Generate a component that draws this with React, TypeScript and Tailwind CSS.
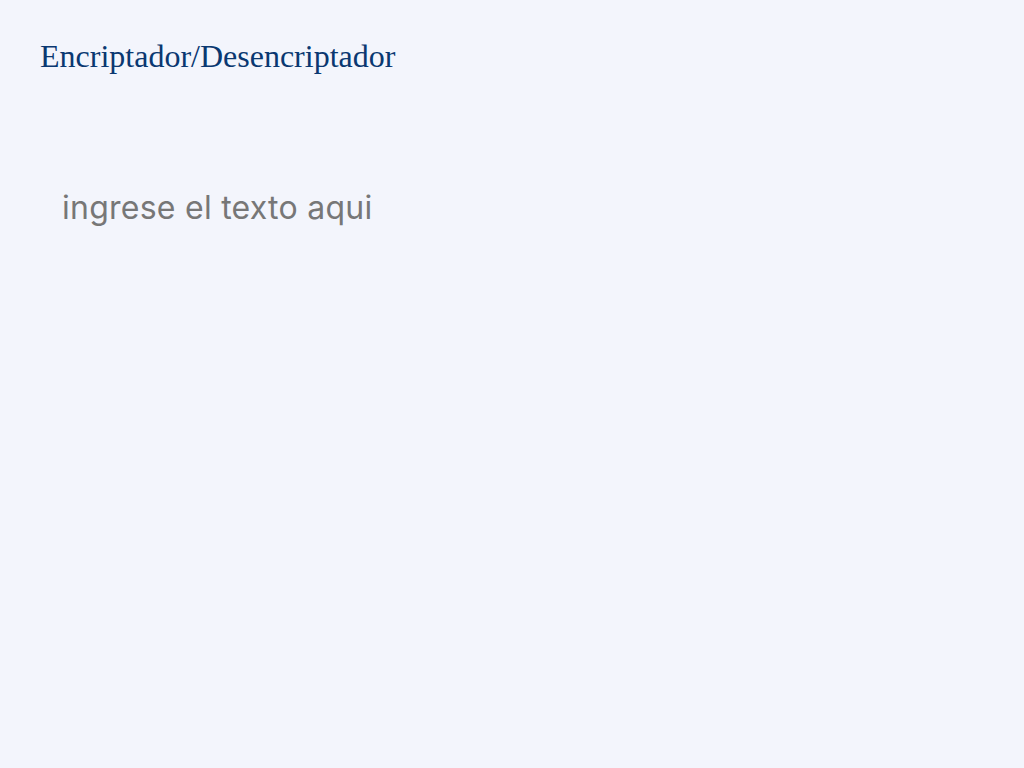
import React from 'react';

export default function App() {
    return (
        <div className="min-h-screen bg-[#f3f5fc] flex flex-col">
            <header className="px-10 pt-[38px]">
                <h1 className="text-[32px] leading-9 text-[#0a3871] font-['Liberation_Serif',serif]">
                    Encriptador/Desencriptador
                </h1>
            </header>
            <main className="px-[62px] pt-[114px]">
                <textarea
                    placeholder="ingrese el texto aqui"
                    className="w-[600px] h-[400px] resize-none bg-transparent border-none outline-none text-[32px] tracking-[0.25px] leading-10 text-[#0a3871] placeholder:text-[#777] font-['Inter',sans-serif]"
                />
            </main>
        </div>
    );
}
